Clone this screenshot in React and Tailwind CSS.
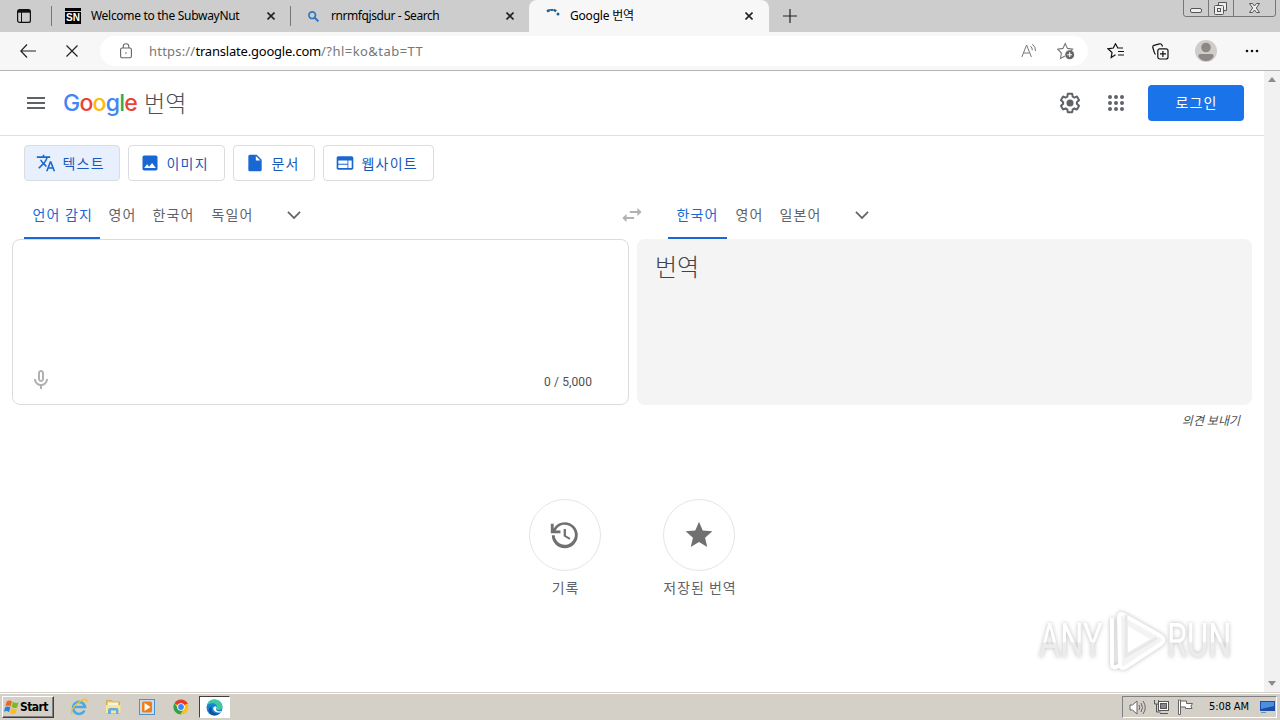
import React, { useState } from 'react';

// Botón de cerrar de cada pestaña
const CloseIcon = () => (
  <svg width="8" height="8" viewBox="0 0 8 8" className="shrink-0" stroke="#222" strokeWidth="1.6" fill="none">
    <path d="M.5.5l7 7M7.5.5l-7 7" />
  </svg>
);

const Chevron = () => (
  <svg width="20" height="20" viewBox="0 0 24 24" fill="#5f6368">
    <path d="M5.410 7.590L4 9l8 8 8-8-1.410-1.410L12 14.170" />
  </svg>
);

const TabStrip = () => (
  <div className="flex h-8 shrink-0 items-start bg-[#cdcdcd] font-['Noto_Sans','Noto_Sans_CJK_KR',sans-serif] text-[12px] text-black">
    <div className="flex h-8 w-[51px] items-center pl-[17px]">
      <svg width="14" height="14" viewBox="0 0 14 14" fill="none" stroke="#111">
        <rect x=".6" y=".6" width="12.8" height="12.8" rx="2" strokeWidth="1.2" />
        <path d="M1 2.3h12" strokeWidth="2.8" />
        <path d="M4.5 3v10" />
      </svg>
    </div>
    <div className="mt-1.5 h-5 w-px bg-[#777]" />
    <div className="flex h-8 w-[238px] items-center pl-[13px]">
      <div className="mr-[10px] flex h-4 w-4 shrink-0 flex-col bg-black">
        <div className="mt-[3px] h-px bg-[#cdcdcd]" />
        <div className="h-3 text-center font-['Liberation_Sans',sans-serif] text-[10px] font-bold leading-[12px] text-white">SN</div>
      </div>
      <span className="w-[176px] whitespace-nowrap tracking-[-0.3px]">Welcome to the SubwayNut</span>
      <CloseIcon />
    </div>
    <div className="mt-1.5 h-5 w-px bg-[#777]" />
    <div className="flex h-8 w-[238px] items-center pl-[17px]">
      <svg width="11" height="11" viewBox="0 0 11 11" fill="none" stroke="#2f78bd" strokeWidth="1.7" className="mr-[12px] shrink-0">
        <circle cx="4.2" cy="4.2" r="3.3" />
        <path d="M6.7 6.7l3.7 3.7" strokeWidth="2" />
      </svg>
      <span className="w-[175px] whitespace-nowrap tracking-[-0.42px]">rnrmfqjsdur - Search</span>
      <CloseIcon />
    </div>
    {/* Pestaña activa */}
    <div className="flex h-8 w-[240px] items-center rounded-t-lg bg-[#f7f7f7] pl-[17px]">
      <svg width="14" height="14" viewBox="0 0 14 14" fill="none" className="mr-[10px] shrink-0">
        <path d="M1 2.500Q6-1 10.500 2.500" stroke="#24608f" strokeWidth="2.400" strokeDasharray="3 .4" />
        <circle cx="12" cy="5" r="1.500" fill="#24608f" />
      </svg>
      <span className="w-[175px] whitespace-nowrap tracking-[-0.2px]">Google 번역</span>
      <CloseIcon />
    </div>
    <svg width="14" height="14" viewBox="0 0 14 14" stroke="#222" strokeWidth="1.2" className="ml-[14px] mt-[9px]">
      <path d="M7 0v14M0 7h14" />
    </svg>
    <svg width="93" height="17" viewBox="0 0 93 17" fill="none" stroke="#777" className="ml-auto mr-1">
      <path d="M.5 0v14q0 2.500 2.500 2.500h87q2.500 0 2.500-2.500V0M25.500 0v16M50.500 0v16" />
      <g stroke="#555">
        <rect x="7.500" y="8.500" width="11" height="4" rx="1.500" fill="#eee" />
        <path d="M35.500 5V2.500h8v8H41" fill="#eee" />
        <rect x="31.500" y="5.500" width="9" height="9" rx="1" fill="#eee" />
        <rect x="34.500" y="8.500" width="3" height="3" />
        <path d="M66.500 3.500h3l2 2.500 2-2.500h3L73.300 8l3.200 4.500h-3l-2-2.500-2 2.500h-3L69.700 8z" fill="#eee" />
      </g>
    </svg>
  </div>
);

const AddressBar = () => (
  <div className="flex h-[39px] shrink-0 items-center border-b border-[#b4b4b4] bg-[#f7f7f7]">
    <svg width="16" height="14" viewBox="0 0 16 14" fill="none" stroke="#222" strokeWidth="1.2" className="ml-5">
      <path d="M7 .5L.8 7 7 13.500M1 7h15" />
    </svg>
    <svg width="12" height="12" viewBox="0 0 12 12" fill="none" stroke="#222" strokeWidth="1.2" className="ml-[30px]">
      <path d="M.5.500l11 11M11.500.500l-11 11" />
    </svg>
    <div className="ml-[22px] flex h-[30px] w-[988px] items-center rounded-full bg-white pl-5">
      <svg width="12" height="16" viewBox="0 0 12 16" fill="none" stroke="#666" strokeWidth="1.1">
        <rect x=".6" y="5" width="10.800" height="9.800" rx="1.500" />
        <path d="M3.200 5V3.500a2.800 2.800 0 0 1 5.600 0V5" />
        <circle cx="6" cy="10" r=".8" fill="#666" stroke="none" />
      </svg>
      <span className="ml-[17px] mt-px whitespace-nowrap font-['Noto_Sans',sans-serif] text-[13px] text-[#777]">
        <span className="tracking-[0.2px]">https://</span>
        <span className="tracking-[-0.2px] text-black">translate.google.com</span>
        <span className="tracking-[0.45px]">/?hl=ko&amp;tab=TT</span>
      </span>
      <svg width="16" height="16" viewBox="0 0 16 16" fill="none" stroke="#777" strokeWidth="1" className="ml-auto">
        <path d="M.8 14L5.600 2l4.800 12M2.600 10h6M9.500 3.200q2 1.600 1.800 4M11.300 1.200q3.500 2.600 3.200 6.800" />
      </svg>
      <svg width="18" height="18" viewBox="0 0 18 18" fill="none" stroke="#777" strokeWidth="1.1" className="ml-5 mr-[13px]">
        <path d="M8 14l-4.500 2.500.9-5.500L.8 7.200l5.100-.8L8.200 1.500l2.300 4.900 5.100.8-1.700 1.900" />
        <circle cx="12.700" cy="12.700" r="4.500" fill="#666" stroke="none" />
        <path d="M12.700 10.300v4.800M10.300 12.700h4.800" stroke="#fff" />
      </svg>
    </div>
    <svg width="18" height="16" viewBox="0 0 18 16" fill="none" stroke="#111" strokeWidth="1.2" className="ml-[19px]">
      <path d="M8.500 11.800L4.200 14.600 5 9.500 1 5.800l5.300-.8L8.500.8 10.800 5H16M11 8.500h6M11 12h6" />
    </svg>
    <svg width="17" height="17" viewBox="0 0 17 17" fill="none" stroke="#111" strokeWidth="1.200" className="ml-[27px]">
      <rect x="5.800" y="5.800" width="10.200" height="10.200" rx="2" />
      <path d="M10.900 8v6M8 10.900h6M3.500 11.500L2.500 10 .8 4.500q-.3-1.700 1.200-2.200L7.500.8Q9 .5 9.800 1.800l.7 1.700" />
    </svg>
    <svg width="22" height="22" viewBox="0 0 22 22" className="ml-[26px]">
      <circle cx="11" cy="11" r="11" fill="#cfccca" />
      <circle cx="11" cy="7.500" r="4.800" fill="#8c8884" />
      <path d="M3.300 16.200q0-2.200 2.200-2.200h11q2.200 0 2.200 2.200Q16.500 21 11 21t-7.700-4.800z" fill="#8c8884" />
    </svg>
    <svg width="14" height="4" viewBox="0 0 14 4" fill="#111" className="ml-[28px]">
      <circle cx="2" cy="2" r="1.300" />
      <circle cx="7" cy="2" r="1.300" />
      <circle cx="12" cy="2" r="1.300" />
    </svg>
  </div>
);

const Header = () => (
  <header className="flex h-[65px] items-center border-b border-[#dfe0e2] pl-6 pr-5">
    <svg width="24" height="24" viewBox="0 0 24 24" fill="#5f6368">
      <path d="M3 18h18v-2H3v2zm0-5h18v-2H3v2zm0-7v2h18V6H3z" />
    </svg>
    <div className="ml-[15px] flex w-[81px] font-['Inter',sans-serif] text-[23px] font-medium leading-none tracking-[-0.75px]">
      <span className="text-[#4285f4]">G</span>
      <span className="text-[#ea4335]">o</span>
      <span className="text-[#fbbc04]">o</span>
      <span className="text-[#4285f4]">g</span>
      <span className="text-[#34a853]">l</span>
      <span className="text-[#ea4335]">e</span>
    </div>
    <span className="pt-[3px] text-[23px] font-light leading-none text-[#4c4f53]">번역</span>
    <svg width="24" height="24" viewBox="0 0 24 24" fill="#5f6368" className="ml-auto">
      <path d="M13.850 22.250h-3.700c-.74 0-1.360-.54-1.450-1.270l-.27-1.890c-.27-.14-.53-.29-.79-.46l-1.800.72c-.7.26-1.470-.03-1.810-.65L2.200 15.530c-.35-.66-.2-1.440.36-1.880l1.530-1.190c-.01-.15-.02-.3-.02-.46 0-.15.01-.31.02-.46l-1.520-1.190c-.59-.45-.74-1.260-.37-1.880l1.850-3.190c.34-.62 1.110-.9 1.790-.63l1.810.73c.26-.17.52-.32.78-.46l.27-1.910c.09-.7.71-1.250 1.440-1.250h3.700c.74 0 1.360.54 1.450 1.270l.27 1.890c.27.14.53.29.79.46l1.800-.72c.71-.26 1.480.03 1.820.65l1.840 3.180c.36.66.2 1.440-.36 1.880l-1.520 1.190c.01.15.02.3.02.46s-.01.31-.02.46l1.520 1.190c.56.45.72 1.230.37 1.860l-1.860 3.220c-.34.62-1.110.9-1.800.63l-1.800-.72c-.26.17-.52.32-.78.46l-.27 1.910c-.1.680-.720 1.220-1.460 1.220zm-3.230-2h2.760l.37-2.550.53-.22c.44-.18.880-.44 1.340-.780l.45-.34 2.380.96 1.380-2.400-2.030-1.580.07-.56c.03-.26.06-.51.06-.78s-.03-.53-.06-.78l-.07-.56 2.030-1.580-1.390-2.400-2.390.96-.45-.35c-.42-.32-.87-.58-1.330-.77l-.52-.22-.37-2.550h-2.760l-.37 2.550-.53.21c-.44.19-.88.44-1.340.79l-.45.33-2.380-.95-1.390 2.390 2.030 1.580-.07.56a7 7 0 0 0-.06.79c0 .26.020.53.06.78l.07.56-2.030 1.580 1.380 2.400 2.390-.96.45.35c.43.33.86.58 1.330.77l.53.22.38 2.550z" />
      <circle cx="12" cy="12" r="3.500" />
    </svg>
    <svg width="24" height="24" viewBox="0 0 24 24" fill="#5f6368" className="ml-[22px] mr-5">
      <path d="M6 8a2 2 0 1 0 0-4 2 2 0 0 0 0 4zm6 12a2 2 0 1 0 0-4 2 2 0 0 0 0 4zm-6 0a2 2 0 1 0 0-4 2 2 0 0 0 0 4zm0-6a2 2 0 1 0 0-4 2 2 0 0 0 0 4zm6 0a2 2 0 1 0 0-4 2 2 0 0 0 0 4zm6-10a2 2 0 1 0 0 4 2 2 0 0 0 0-4zm-6 4a2 2 0 1 0 0-4 2 2 0 0 0 0 4zm6 6a2 2 0 1 0 0-4 2 2 0 0 0 0 4zm0 6a2 2 0 1 0 0-4 2 2 0 0 0 0 4z" />
    </svg>
    <button className="h-9 w-24 rounded bg-[#1a73e8] pl-px text-[14px] tracking-[1.2px] text-white">로그인</button>
  </header>
);

const modes = [
  { label: '텍스트', width: 'w-[96px]', path: 'M12.870 15.070l-2.540-2.510.03-.03A17.520 17.520 0 0 0 14.070 6H17V4h-7V2H8v2H1v1.990h11.170C11.500 7.920 10.440 9.750 9 11.350 8.070 10.320 7.300 9.190 6.690 8h-2c.73 1.630 1.730 3.170 2.980 4.560l-5.090 5.020L4 19l5-5 3.110 3.110.76-2.040zM18.500 10h-2L12 22h2l1.120-3h4.750L21 22h2l-4.500-12zm-2.620 7l1.620-4.330L19.120 17h-3.240z' },
  { label: '이미지', width: 'w-[97px]', path: 'M21 19V5c0-1.100-.9-2-2-2H5c-1.100 0-2 .9-2 2v14c0 1.100.9 2 2 2h14c1.100 0 2-.9 2-2zM8.500 13.500l2.500 3.010L14.500 12l4.500 6H5l3.500-4.500z' },
  { label: '문서', width: 'w-[82px]', path: 'M6 2c-1.100 0-1.990.9-1.990 2L4 20c0 1.100.89 2 1.990 2H18c1.100 0 2-.9 2-2V8l-6-6H6zm7 7V3.500L18.500 9H13z' },
  { label: '웹사이트', width: 'w-[111px]', path: 'M20 4H4c-1.100 0-1.990.9-1.990 2L2 18c0 1.100.9 2 2 2h16c1.100 0 2-.9 2-2V6c0-1.100-.9-2-2-2zm-5 14H4v-4h11v4zm0-5H4V9h11v4zm5 5h-4V9h4v9z' },
];

const ModeTabs = () => {
  const [mode, setMode] = useState('텍스트');

  return (
    <nav className="flex gap-2 pl-6 pt-[9px]">
      {modes.map((m) => (
        <button
          key={m.label}
          onClick={() => setMode(m.label)}
          className={`flex h-9 items-center whitespace-nowrap rounded border border-[#dadce0] pl-[11px] text-[14px] tracking-[1.2px] text-[#185abc] ${m.width} ${mode === m.label ? 'bg-[#e8f0fe]' : 'bg-white'}`}
        >
          <svg width="20" height="20" viewBox="0 0 24 24" fill="#1967d2" className="mr-[6.5px] shrink-0">
            <path d={m.path} />
          </svg>
          <span className="pt-0.5">{m.label}</span>
        </button>
      ))}
    </nav>
  );
};

const LanguageList = ({ languages }) => {
  const [selected, setSelected] = useState(languages[0].label);

  return (
    <div className="flex h-12">
      {languages.map((lang) => (
        <button
          key={lang.label}
          onClick={() => setSelected(lang.label)}
          className={`border-b-2 pl-[8.5px] pt-0.5 text-left whitespace-nowrap text-[14px] tracking-[1.1px] ${lang.width} ${selected === lang.label ? 'border-[#1967d2] text-[#1967d2]' : 'border-transparent text-[#5f6368]'}`}
        >
          {lang.label}
        </button>
      ))}
      <button className="ml-5"><Chevron /></button>
    </div>
  );
};

const Translator = () => (
  <>
    <div className="flex pl-6 pt-[10px]">
      <div className="w-[596px]">
        <LanguageList
          languages={[
            { label: '언어 감지', width: 'w-[76px]' },
            { label: '영어', width: 'w-[44px]' },
            { label: '한국어', width: 'w-[59px]' },
            { label: '독일어', width: 'w-[61px]' },
          ]}
        />
      </div>
      <div className="flex w-12 items-center">
        <svg width="24" height="24" viewBox="0 0 24 24" fill="#b0b2b4">
          <path d="M6.990 11L3 15l3.990 4v-3H14v-2H6.990v-3zM21 9l-3.990-4v3H10v2h7.010v3L21 9z" transform="translate(-1 0) scale(1.080 1)" />
        </svg>
      </div>
      <LanguageList
        languages={[
          { label: '한국어', width: 'w-[59px]' },
          { label: '영어', width: 'w-[44px]' },
          { label: '일본어', width: 'w-[61px]' },
        ]}
      />
    </div>
    <div className="flex gap-2 pl-3">
      <div className="flex h-[166px] w-[617px] items-end justify-between rounded-lg border border-[#dadce0] pb-3 pl-4 pr-9">
        <svg width="24" height="24" viewBox="0 0 24 24" fill="#afb1b3">
          <path d="M12 14c1.660 0 3-1.340 3-3V5c0-1.660-1.340-3-3-3S9 3.340 9 5v6c0 1.660 1.340 3 3 3zM11 5c0-.55.45-1 1-1s1 .45 1 1v6c0 .55-.45 1-1 1s-1-.45-1-1V5zm6 6c0 2.760-2.240 5-5 5s-5-2.240-5-5H5c0 3.530 2.610 6.430 6 6.920V21h2v-3.080c3.390-.49 6-3.390 6-6.920h-2z" />
        </svg>
        <span className="mb-px font-['Roboto',sans-serif] text-[12px] tracking-[0.1px] text-[#4c4f53]">0 / 5,000</span>
      </div>
      <div className="h-[166px] w-[615px] rounded-lg bg-[#f4f4f4] pl-[18px] pt-[11px] text-[24px] font-light text-[#404347]">번역</div>
    </div>
    <div className="mr-6 mt-[7px] text-right text-[12px] italic leading-[18px] text-[#4c4f53]">의견 보내기</div>
  </>
);

const Shortcuts = () => (
  <div className="mt-[69px] flex justify-center text-[14px] tracking-[0.9px] text-[#5f6368]">
    <div className="flex w-[134px] flex-col items-center">
      <div className="flex h-[72px] w-[72px] items-center justify-center rounded-full border border-[#e4e5e7]">
        <svg width="32" height="32" viewBox="0 0 24 24" fill="#707070">
          <path d="M13 3a9 9 0 0 0-7.700 4.330V4h-2v6.700H10v-2H6.650A7 7 0 1 1 6 12H4a9 9 0 1 0 9-9z" transform="translate(-2.200 -.8) scale(1.080)" />
          <path d="M11 7.500V13l4.300 2.600.8-1.300-3.400-2V7.500z" />
        </svg>
      </div>
      <span className="ml-px mt-[7px]">기록</span>
    </div>
    <div className="flex w-[134px] flex-col items-center">
      <div className="flex h-[72px] w-[72px] items-center justify-center rounded-full border border-[#e4e5e7]">
        <svg width="32" height="32" viewBox="0 0 24 24" fill="#707070">
          <path d="M12 17.270L18.180 21l-1.640-7.030L22 9.240l-7.190-.61L12 2 9.190 8.630 2 9.240l5.460 4.730L5.820 21z" />
        </svg>
      </div>
      <span className="ml-0.5 mt-[7px]">저장된 번역</span>
    </div>
  </div>
);

// Marca de agua sobre la esquina inferior derecha
const Watermark = () => (
  <div className="absolute bottom-5 right-[24px] h-[64px] font-['Roboto',sans-serif] drop-shadow-[0_0_2px_#bbb]">
    <svg width="204" height="64" viewBox="0 0 204 64">
      <defs>
        <linearGradient id="fade" x1="0" y1="0" x2="0" y2="1">
          <stop offset=".52" stopColor="#fff" />
          <stop offset=".54" stopColor="#ececec" />
        </linearGradient>
      </defs>
      <g fill="url(#fade)" fontSize="48">
        <text transform="translate(3 49) scale(.68 1)">ANY</text>
        <text transform="translate(131 49) scale(.68 1)">RUN</text>
      </g>
      <g fill="none" stroke="#fff" strokeWidth="4">
        <path d="M83 9q0-5 5-2l37 21q5 4 0 8L90 59q-4 3-6-1z" fill="#f3f3f3" strokeLinejoin="round" />
        <path d="M76 10v46q0 4 4 3l4-2" strokeLinejoin="round" />
        <path d="M90 7v41l31-18" stroke="#e8e8e8" strokeWidth="3" />
      </g>
      <path d="M92 18l22 13-22 13z" fill="#fff" />
    </svg>
  </div>
);

const ScrollBar = () => (
  <div className="flex w-4 shrink-0 flex-col items-center justify-between bg-[#f1f1f1] py-[6px]">
    <svg width="8" height="5" viewBox="0 0 8 5" fill="#8c8c8c"><path d="M4 0l4 5H0z" /></svg>
    <svg width="8" height="5" viewBox="0 0 8 5" fill="#8c8c8c"><path d="M0 0h8L4 5z" /></svg>
  </div>
);

// Barra de tareas con el tema clásico de Windows
const Taskbar = () => (
  <div className="flex h-7 shrink-0 items-center border-t border-[#d4d0c8] bg-[#d4d0c8] font-['DejaVu_Sans_Condensed','DejaVu_Sans',sans-serif] text-black shadow-[inset_0_1px_0_#fff]">
    <button className="ml-0.5 mt-px flex h-[22px] w-[52px] items-center border border-b-[#404040] border-l-white border-r-[#404040] border-t-white pl-px text-[12px] font-bold tracking-[-0.6px] shadow-[inset_-1px_-1px_0_#808080]">
      <svg width="16" height="16" viewBox="0 0 17 16" className="shrink-0">
        <path d="M3 2q3-2 5.500 0L7 7.500Q4.500 5.500 1.500 7z" fill="#ef6421" />
        <path d="M9.500 2.500q3 2 6 .500L14 8.500Q11 10 8 8z" fill="#7cb928" />
        <path d="M1.300 8q3-1.500 5.500.500L5.300 13.500Q3 11.500 0 13z" fill="#2c82d2" />
        <path d="M7.800 9q3 2 6 .500L12.300 15q-3 1.500-6-.500z" fill="#fdbc1e" />
      </svg>
      Start
    </button>
    <svg width="18" height="18" viewBox="0 0 18 18" className="ml-[16px] mt-px" fill="none">
      <path d="M14.500 12.500A6 6 0 1 1 15 9H4.500" stroke="#4aa9e2" strokeWidth="2.600" />
      <path d="M2.500 16C-.5 15.500 3 8 9 4s9-3.500 7.500.5" stroke="#f0c232" strokeWidth="1.300" />
    </svg>
    <svg width="17" height="16" viewBox="0 0 17 16" className="ml-[17px] mt-px">
      <path d="M1.500 1.500h5l1 1.500h7v11h-13z" fill="#e9c863" stroke="#c7a145" strokeWidth=".7" />
      <path d="M3 3.500h10v3H3z" fill="#f8f4dc" />
      <path d="M1 6h14.500v8H1z" fill="#f9e49a" />
      <path d="M3 15v-4q0-2 2-2h6.500q2 0 2 2v4h-2.500v-3.500H6V15z" fill="#63aee0" />
    </svg>
    <svg width="16" height="16" viewBox="0 0 16 16" className="ml-[17px] mt-px">
      <rect x=".5" y=".5" width="15" height="15" fill="#c4dff4" stroke="#4d92cd" />
      <rect x="3" y="2.500" width="10" height="11" rx="1.500" fill="#f07e16" />
      <path d="M5.500 4L11.500 8l-6 4z" fill="#fff" />
    </svg>
    <svg width="16" height="16" viewBox="0 0 16 16" className="ml-[18px] mt-px">
      <circle cx="8" cy="8" r="7.500" fill="#fbc116" />
      <path d="M8 8L1.500 4.200A7.500 7.500 0 0 1 14.500 4.200z" fill="#e33b2e" />
      <path d="M1.500 4.200A7.500 7.500 0 0 0 7.400 15.500L10.500 10 5 9.500z" fill="#2da14c" />
      <path d="M8 4.200h6.500L15 5H8z" fill="#e33b2e" />
      <circle cx="8" cy="8" r="3.800" fill="#fff" />
      <circle cx="8" cy="8" r="2.900" fill="#4285f4" />
    </svg>
    <div className="ml-[10px] mt-px flex h-[22px] w-[31px] items-center justify-center border border-b-white border-l-[#404040] border-r-white border-t-[#404040] bg-white">
      <svg width="17" height="17" viewBox="0 0 17 17">
        <circle cx="8.500" cy="8.500" r="8" fill="#1683d3" />
        <path d="M1 6.500C2 2 5.500.500 8.500.500c5 0 8 3.700 8 7 0 2.500-2 3.500-4 3.500-1.800 0-2.500-.700-2.500-1.200 0-.6.900-.9.900-2.300C10.900 5.500 9 4.200 6.500 4.200 3.500 4.200 1.500 5.500 1 6.500z" fill="#40c8a0" />
        <path d="M5.500 9c0 4.500 4 6.500 8 5.300-2 2.400-5.500 2.700-8 1.500-3.500-1.800-4-6.500 0-8.500z" fill="#14509c" />
        <path d="M7.700 8c-1.500 3 1.500 6 6.500 5.500l1.500-1.500c-2.500.8-6 .5-5.700-2.200.8-.7.700-2-.3-2.600z" fill="#fff" />
      </svg>
    </div>
    <div className="ml-auto mr-[3px] mt-px flex h-[22px] w-[155px] items-center border border-b-white border-l-[#808080] border-r-white border-t-[#808080] pl-[6px]">
      <svg width="17" height="15" viewBox="0 0 17 15" fill="none" stroke="#666">
        <path d="M1 5h2.500L8 1v13l-4.500-4H1z" fill="#fff" />
        <path d="M10 5q1.500 2.500 0 5M12 3q3 4.500 0 9M14 1q4.500 6.500 0 13" />
      </svg>
      <svg width="17" height="16" viewBox="0 0 17 16" fill="none" stroke="#555" className="ml-[7px]">
        <rect x="5.500" y="2.500" width="10" height="9" fill="#fff" />
        <rect x="7.500" y="4.500" width="6" height="5" fill="#888" />
        <path d="M7 14.500h8M1.500 1v4h4V1M3.500 5v8h4" />
      </svg>
      <svg width="17" height="16" viewBox="0 0 17 16" fill="none" stroke="#666" className="ml-[7px]">
        <path d="M1.500 1v14.500h2V1zM3.500 2h6v2.500h6L14 7l1 2.500H8.500V8h-5" fill="#fff" />
      </svg>
      <span className="ml-[15px] w-[51px] whitespace-nowrap text-[11px] tracking-[-0.1px]">5:08 AM</span>
      <svg width="15" height="14" viewBox="0 0 15 14" className="shrink-0">
        <path d="M0 1h15v10H0z" fill="#1b4fa5" />
        <path d="M1 2h13v4L1 9z" fill="#4c8ee0" />
        <path d="M1 12h5v1H1z" fill="#5f92c5" />
      </svg>
    </div>
  </div>
);

export default function App() {
  return (
    <div className="flex h-[720px] w-[1280px] flex-col overflow-hidden bg-white">
      <TabStrip />
      <AddressBar />
      <div className="flex h-[621px] shrink-0">
        <main className="relative w-[1264px] font-['Roboto','Noto_Sans_CJK_KR',sans-serif]">
          <Header />
          <ModeTabs />
          <Translator />
          <Shortcuts />
          <Watermark />
        </main>
        <ScrollBar />
      </div>
      <Taskbar />
    </div>
  );
}
